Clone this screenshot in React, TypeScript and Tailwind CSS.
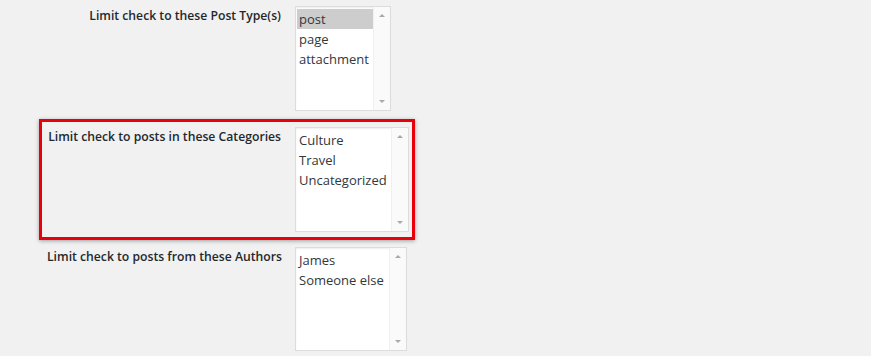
import React from "react";

type ListProps = {
  options: string[];
  selected?: string;
  width: string;
  height: string;
};

const ScrollList: React.FC<ListProps> = ({ options, selected, width, height }) => (
  <div
    className={`flex shrink-0 border border-[#dcdcdc] bg-white shadow-[inset_0_1px_2px_rgba(0,0,0,0.07)] ${width} ${height}`}
  >
    <div className="flex min-w-0 flex-1 flex-col pl-[1px] pt-[2px]">
      {options.map((opt) => (
        <div
          key={opt}
          className={`h-[20px] whitespace-nowrap pl-[2px] text-[13px] leading-[20px] text-[#32373c] ${
            opt === selected ? "bg-[#cdcdcd]" : ""
          }`}
        >
          {opt}
        </div>
      ))}
    </div>
    <div className="flex w-[17px] shrink-0 flex-col items-center justify-between border-l border-[#f0f0f0] bg-[#fafafa] py-[7px]">
      <span className="h-0 w-0 border-x-[3px] border-b-[3px] border-x-transparent border-b-[#a8a8a8]" />
      <span className="h-0 w-0 border-x-[3px] border-t-[3px] border-x-transparent border-t-[#a8a8a8]" />
    </div>
  </div>
);

const Label: React.FC<{ children: React.ReactNode }> = ({ children }) => (
  <div className="w-[234px] shrink-0 whitespace-nowrap pt-[1px] text-right text-[12.2px] font-semibold leading-[18px] text-[#23282d]">
    {children}
  </div>
);

export default function App() {
  return (
    <div
      className="h-[356px] w-[871px] overflow-hidden bg-[#f1f1f1] pt-[6px]"
      style={{ fontFamily: '"Open Sans", "Noto Sans", sans-serif' }}
    >
      <div className="flex gap-[14px] pl-[47px]">
        <Label>Limit check to these Post Type(s)</Label>
        <ScrollList
          options={["post", "page", "attachment"]}
          selected="post"
          width="w-[96px]"
          height="h-[105px]"
        />
      </div>

      <div className="ml-[39px] mt-[8px] w-[376px] border-[3px] border-[#e8000b] p-[5px] shadow-[0_1px_4px_rgba(0,0,0,0.35)]">
        <div className="flex gap-[14px]">
          <Label>Limit check to posts in these Categories</Label>
          <ScrollList
            options={["Culture", "Travel", "Uncategorized"]}
            width="w-[114px]"
            height="h-[105px]"
          />
        </div>
      </div>

      <div className="mt-[7px] flex gap-[14px] pl-[47px]">
        <Label>Limit check to posts from these Authors</Label>
        <ScrollList
          options={["James", "Someone else"]}
          width="w-[112px]"
          height="h-[104px]"
        />
      </div>
    </div>
  );
}
